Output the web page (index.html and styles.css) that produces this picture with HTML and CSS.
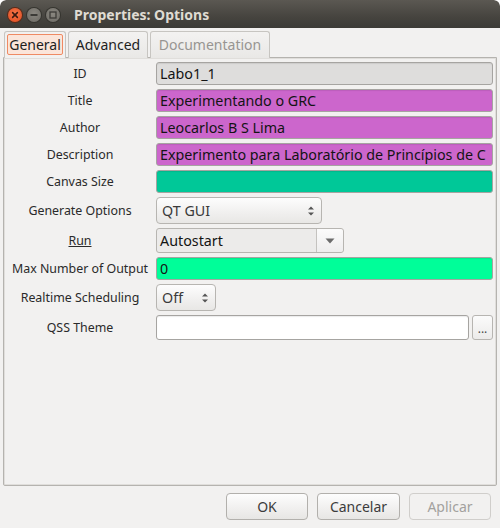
FILE: index.html
```html
<!DOCTYPE html>
<html>
<head>
<meta charset="utf-8">
<link rel="stylesheet" href="styles.css">
</head>
<body>
<div class="window">
  <div class="titlebar">
    <div class="wbtns">
      <span class="wbtn close"><svg width="14" height="14" viewBox="0 0 14 14"><path d="M4.6 4.6L9.4 9.4M9.4 4.6L4.6 9.4" stroke="#3a1a10" stroke-width="1.5" stroke-linecap="round"/></svg></span>
      <span class="wbtn"><svg width="14" height="14" viewBox="0 0 14 14"><path d="M3.5 7H10.5" stroke="#3c3b37" stroke-width="2"/></svg></span>
      <span class="wbtn"><svg width="14" height="14" viewBox="0 0 14 14"><rect x="4" y="4" width="6" height="6" fill="none" stroke="#3c3b37" stroke-width="1.3"/></svg></span>
    </div>
    <div class="wtitle">Properties: Options</div>
  </div>
  <div class="content">
    <div class="tabs">
      <div class="tab active"><span class="focus">General</span></div>
      <div class="tab t-adv">Advanced</div>
      <div class="tab t-doc disabled">Documentation</div>
    </div>
    <div class="panel">
      <div class="row h23"><div class="label">ID</div><div class="field f-id">Labo1_1</div></div>
      <div class="row h23"><div class="label">Title</div><div class="field f-str">Experimentando o GRC</div></div>
      <div class="row h23"><div class="label">Author</div><div class="field f-str">Leocarlos B S Lima</div></div>
      <div class="row h23"><div class="label">Description</div><div class="field f-str"><span class="clip">Experimento para Laboratório de Princípios de C</span></div></div>
      <div class="row h23"><div class="label">Canvas Size</div><div class="field f-vec"></div></div>
      <div class="row h27"><div class="label">Generate Options</div>
        <div class="combo c-gen"><span class="ctext">QT GUI</span><span class="updown"><svg width="8" height="12" viewBox="0 0 8 12"><path d="M1 4.5L4 1.5L7 4.5Z M1 7.5L4 10.5L7 7.5Z" fill="#555"/></svg></span></div>
      </div>
      <div class="row h25"><div class="label"><u>Run</u></div>
        <div class="drop"><span class="dtext">Autostart</span><span class="darrow"><svg width="10" height="6" viewBox="0 0 10 6"><path d="M0.5 0.5H9.5L5 5.5Z" fill="#6b6b6b"/></svg></span></div>
      </div>
      <div class="row h23"><div class="label">Max Number of Output</div><div class="field f-int">0</div></div>
      <div class="row h27"><div class="label">Realtime Scheduling</div>
        <div class="combo c-off"><span class="ctext">Off</span><span class="updown"><svg width="8" height="12" viewBox="0 0 8 12"><path d="M1 4.5L4 1.5L7 4.5Z M1 7.5L4 10.5L7 7.5Z" fill="#555"/></svg></span></div>
      </div>
      <div class="row h25"><div class="label">QSS Theme</div>
        <div class="qss"><div class="field f-white"></div><div class="dots">...</div></div>
      </div>
    </div>
    <div class="buttons">
      <div class="btn b-ok">OK</div>
      <div class="btn b-cancel">Cancelar</div>
      <div class="btn b-apply disabled">Aplicar</div>
    </div>
  </div>
</div>
</body>
</html>
```

FILE: styles.css
```css
html, body {
  margin: 0;
  padding: 0;
  background: #ffffff;
}
body {
  width: 500px;
  height: 528px;
  overflow: hidden;
  font-family: "Noto Sans", "DejaVu Sans", sans-serif;
}
.window {
  width: 500px;
  height: 528px;
  background: #f2f1f0;
  border-radius: 6px 6px 0 0;
  overflow: hidden;
  display: flex;
  flex-direction: column;
}
.titlebar {
  height: 28px;
  flex: none;
  background: linear-gradient(#5b5852, #46443f 60%, #3c3b37);
  display: flex;
  align-items: center;
  border-radius: 6px 6px 0 0;
}
.wbtns {
  display: flex;
  gap: 5px;
  padding-left: 8px;
  padding-top: 1px;
}
.wbtn {
  width: 14px;
  height: 14px;
  border-radius: 50%;
  background: radial-gradient(circle at 50% 40%, #8a8780, #6b6963);
  box-shadow: 0 0 0 1px #35342f;
  display: flex;
}
.wbtn.close {
  background: radial-gradient(circle at 50% 40%, #f4774a, #e2481c);
  box-shadow: 0 0 0 1px #5a2a18;
}
.wtitle {
  margin-left: 14px;
  color: #dfdbd2;
  font-weight: bold;
  font-size: 14px;
  padding-top: 1px;
}
.content {
  flex: 1;
  display: flex;
  flex-direction: column;
}
.tabs {
  display: flex;
  gap: 2px;
  padding-left: 4px;
  margin-top: 3px;
  height: 27px;
  position: relative;
  z-index: 1;
}
.tab {
  box-sizing: border-box;
  height: 27px;
  border: 1px solid #c7c5c1;
  border-bottom: none;
  border-radius: 3px 3px 0 0;
  background: linear-gradient(#f3f2f1, #e9e8e6);
  font-size: 14px;
  color: #1e1e1e;
  display: flex;
  align-items: center;
  justify-content: center;
  padding-bottom: 1px;
}
.tab.active {
  width: 62px;
  background: #f2f1f0;
  padding: 2px 2px 3px 2px;
  align-items: stretch;
}
.focus {
  flex: 1;
  border: 1px solid #ef8a63;
  border-radius: 2px;
  background: #fbe5da;
  display: flex;
  align-items: center;
  justify-content: center;
}
.t-adv { width: 80px; }
.t-doc { width: 120px; }
.tab.disabled { color: #979592; }
.panel {
  margin: -1px 3px 0 3px;
  height: 429px;
  box-sizing: border-box;
  border: 1px solid #b5b3af;
  box-shadow: inset 0 0 0 1px #e0dedb;
  border-radius: 0 0 2px 2px;
  padding: 4px 3px 0 4px;
  display: flex;
  flex-direction: column;
  gap: 4px;
}
.row {
  display: flex;
  align-items: center;
  gap: 4px;
}
.h23 { height: 23px; }
.h25 { height: 25px; }
.h27 { height: 27px; }
.label {
  width: 144px;
  flex: none;
  text-align: center;
  font-size: 12.4px;
  color: #2a2a2a;
}
.field {
  flex: 1;
  min-width: 0;
  height: 100%;
  box-sizing: border-box;
  border: 1px solid #a6a4a1;
  border-radius: 3px;
  font-size: 14.3px;
  color: #141414;
  padding: 0 3px;
  display: flex;
  align-items: center;
  white-space: nowrap;
  overflow: hidden;
  box-shadow: inset 0 1px 1px rgba(0,0,0,0.08);
}
.clip {
  display: block;
  overflow: hidden;
  white-space: nowrap;
}
.f-id { background: #dedddc; }
.f-str { background: #cc66cc; }
.f-vec { background: #00c898; }
.f-int { background: #00fe99; }
.f-white { background: #ffffff; }
.combo {
  box-sizing: border-box;
  height: 100%;
  border: 1px solid #b7b5b1;
  border-radius: 4px;
  background: linear-gradient(#fdfdfd, #f0efee 60%, #e8e7e5);
  display: flex;
  align-items: center;
  justify-content: space-between;
  padding: 0 6px 0 5px;
  font-size: 14.3px;
  color: #3a3a3a;
}
.c-gen { width: 166px; }
.c-off { width: 60px; }
.updown { display: flex; padding-top: 1px; }
.drop {
  box-sizing: border-box;
  width: 188px;
  height: 100%;
  border: 1px solid #b7b5b1;
  border-radius: 3px;
  background: #ecebea;
  display: flex;
  align-items: stretch;
  font-size: 14.3px;
  color: #141414;
}
.dtext {
  flex: 1;
  display: flex;
  align-items: center;
  padding-left: 3px;
}
.darrow {
  width: 26px;
  border-left: 1px solid #c4c2bf;
  background: linear-gradient(#fbfbfb, #eeeded);
  border-radius: 0 3px 3px 0;
  display: flex;
  align-items: center;
  justify-content: center;
}
.qss {
  flex: 1;
  height: 100%;
  display: flex;
  gap: 3px;
}
.dots {
  width: 21px;
  box-sizing: border-box;
  border: 1px solid #b7b5b1;
  border-radius: 3px;
  background: linear-gradient(#fbfbfb, #ecebea);
  font-size: 12px;
  color: #4a4a4a;
  display: flex;
  align-items: center;
  justify-content: center;
  padding-top: 2px;
}
.buttons {
  display: flex;
  justify-content: flex-end;
  gap: 9px;
  padding-right: 9px;
  margin-top: 7px;
}
.btn {
  box-sizing: border-box;
  height: 27px;
  border: 1px solid #b2b0ac;
  border-radius: 4px;
  background: linear-gradient(#fdfdfd, #f0efee 60%, #e7e6e4);
  font-size: 14px;
  color: #3c3c3c;
  display: flex;
  align-items: center;
  justify-content: center;
}
.b-ok { width: 82px; }
.b-cancel { width: 83px; }
.b-apply { width: 82px; }
.btn.disabled {
  color: #a3a19e;
  border-color: #d0cecb;
  background: #f2f1f0;
}
```
